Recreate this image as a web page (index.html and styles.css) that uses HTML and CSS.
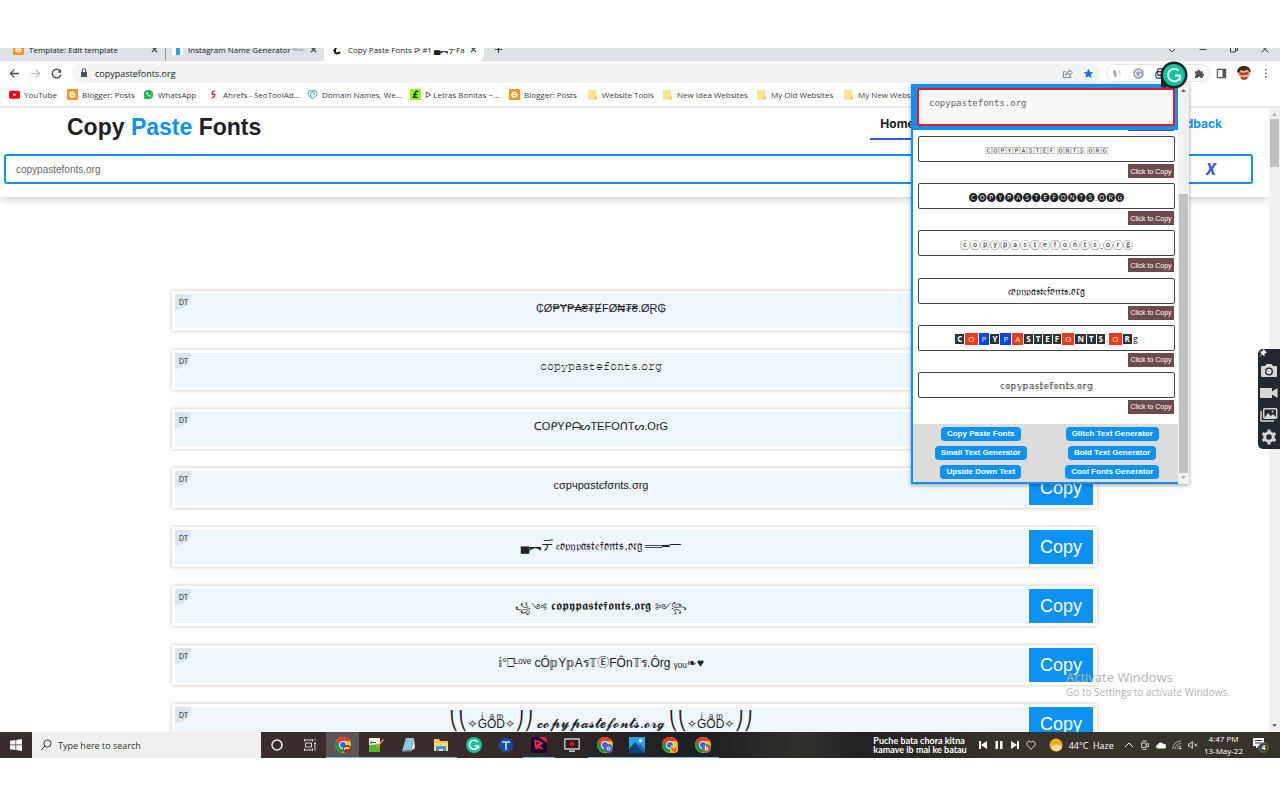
FILE: index.html
```html
<!DOCTYPE html>
<html lang="en">
<head>
<meta charset="utf-8">
<title>Copy Paste Fonts</title>
<link rel="stylesheet" href="styles.css">
</head>
<body>
<svg class="defs" aria-hidden="true">
  <defs>
    <symbol id="chrome" viewBox="0 0 16 16">
      <circle cx="8" cy="8" r="8" fill="#fbc116"/>
      <path d="M8 8 1.1 4A8 8 0 0 0 7.500 16L11 10z" fill="#229342"/>
      <path d="M1.1 4A8 8 0 0 1 14.900 4L8 4.400z" fill="#e33b2e"/>
      <path d="M1.100 4 8 4.400 8 8 4.500 9.500z" fill="#e33b2e"/>
      <circle cx="8" cy="8" r="3.900" fill="#fff"/>
      <circle cx="8" cy="8" r="3" fill="#2a6fe8"/>
    </symbol>
    <symbol id="blogger" viewBox="0 0 12 12">
      <rect width="12" height="12" rx="1" fill="#f9961e"/>
      <path d="M4.600 2.800h2a1.700 1.700 0 0 1 1.700 1.700v.7c0 .4.9.2.9.9v1.200a2 2 0 0 1-2 2H4.600a1.800 1.800 0 0 1-1.800-1.800V4.600a1.800 1.800 0 0 1 1.800-1.800z" fill="#fff"/>
      <path d="M4.700 4.800h1.800M4.700 7.300h2.600" stroke="#f9961e" stroke-width="1" stroke-linecap="round"/>
    </symbol>
    <symbol id="folder" viewBox="0 0 12 12">
      <path d="M1 1h9v10.500H1z" fill="#fde293"/>
      <path d="M8 8.500h2V7h.8v4.500H8z" fill="#f6cf61"/>
    </symbol>
    <symbol id="close" viewBox="0 0 8 8"><path d="M1 1l6 6M7 1L1 7" stroke="#3c4043" stroke-width="1.400"/></symbol>
    <symbol id="up" viewBox="0 0 6 4"><path d="M0 4l3-3 3 3z" fill="currentColor"/></symbol>
    <symbol id="down" viewBox="0 0 6 4"><path d="M0 0l3 3 3-3z" fill="currentColor"/></symbol>
  </defs>
</svg>

<div class="desktop">
  <div class="browser">
    <div class="tabs">
      <div class="tab tab-first">
        <svg class="i11"><use href="#blogger"/></svg><span class="tab-title">Template: Edit template</span><svg class="i7"><use href="#close"/></svg>
      </div>
      <div class="tab tab-second">
        <svg class="i11" viewBox="0 0 11 11"><path d="M0 0h11v11H0z" fill="#fff"/><path d="M4 1h4v10H4z" fill="#22a6f2"/></svg><span class="tab-title">Instagram Name Generator <small>ᵂʰᵃᵗˢ</small></span><svg class="i7"><use href="#close"/></svg>
      </div>
      <div class="tab tab-active">
        <svg class="i11" viewBox="0 0 11 11"><path d="M7.500 1.500C5 1 3.500 4 3 6.500 2.500 9.500 5 10.500 8 8" fill="none" stroke="#111" stroke-width="2"/><path d="M1 6.500 3 6" stroke="#111"/></svg><span class="tab-title">Copy Paste Fonts ᐅ #1 ▄︻デFan</span><svg class="i7"><use href="#close"/></svg>
      </div>
      <svg class="plus" viewBox="0 0 10 10"><path d="M5 1v8M1 5h8" stroke="#3c4043" stroke-width="1.300"/></svg>
      <div class="window-buttons">
        <svg viewBox="0 0 10 10"><path d="M2 5l3 3 3-3" fill="none" stroke="#3c4043"/></svg>
        <svg viewBox="0 0 10 10"><path d="M1.500 5.500h7" stroke="#3c4043"/></svg>
        <svg viewBox="0 0 10 10"><path d="M1.500 3h5v5h-5zM3.500 3V1.500h5v5H6.500" fill="none" stroke="#3c4043"/></svg>
        <svg viewBox="0 0 10 10"><path d="M1.500 2l7 6.500M8.500 2l-7 6.500" stroke="#3c4043"/></svg>
      </div>
    </div>

    <div class="toolbar">
      <svg class="i11" viewBox="0 0 12 12"><path d="M11 6H2M6 1.500 1.500 6 6 10.500" fill="none" stroke="#4a4d51" stroke-width="1.400"/></svg>
      <svg class="i11" viewBox="0 0 12 12"><path d="M1 6h9M6 1.500 10.500 6 6 10.500" fill="none" stroke="#b5b7ba" stroke-width="1.300"/></svg>
      <svg class="i11" viewBox="0 0 12 12"><path d="M10 3.500A4.700 4.700 0 1 0 10.700 7" fill="none" stroke="#4a4d51" stroke-width="1.500"/><path d="M11 1v4.200H6.800z" fill="#4a4d51"/></svg>
      <div class="omnibox">
        <svg class="lock" viewBox="0 0 8 10"><path d="M1 4h6v5H1z" fill="#4f5357"/><path d="M2.300 4V2.500a1.700 1.700 0 0 1 3.400 0V4" fill="none" stroke="#4f5357" stroke-width="1.100"/></svg>
        <span class="url">copypastefonts.org</span>
        <svg class="i11" viewBox="0 0 12 12"><path d="M4 4H1.500v6.500h8V8" fill="none" stroke="#6a6e73"/><path d="M3.500 8c.5-3 2.500-4 4.500-4V2l3.500 3L8 7.800V6C6 6 4.500 6.500 3.500 8z" fill="none" stroke="#6a6e73" stroke-width=".9"/></svg>
        <svg class="i11" viewBox="0 0 12 12"><path d="M6 .8 7.600 4.300l3.800.4-2.900 2.500.9 3.800L6 9 2.600 11l.9-3.800L.6 4.700l3.800-.4z" fill="#1a73e8"/></svg>
      </div>
      <div class="extensions">
        <svg class="i11" viewBox="0 0 12 12"><path d="M3 2c2 0 4 3 3 8C3 10 1 6 3 2z" fill="#a9acb0"/><path d="M7 1.500c3 1 5 4 2.500 8C9.500 6 8 5 7 1.500z" fill="#d2d4d6"/></svg>
        <svg class="i11" viewBox="0 0 12 12"><circle cx="6" cy="6" r="5.700" fill="#97a0c0"/><path d="M8.500 4A3.200 3.200 0 1 0 9.200 6.500H6.500" fill="none" stroke="#fff" stroke-width="1.200"/></svg>
        <svg class="i11" viewBox="0 0 12 12"><rect x="3" y="1" width="8" height="7" rx="1" fill="none" stroke="#333" stroke-width="1.200"/><rect x="1" y="4" width="8" height="7" rx="2" fill="none" stroke="#333" stroke-width="1.200"/><path d="M3 8h4" stroke="#333"/></svg>
        <svg class="i11 puzzle" viewBox="0 0 12 12"><path d="M1 3.500h2.500a1.500 1.500 0 1 1 3 0H9.500v2.700a1.500 1.500 0 1 1 0 3V11H7a1.500 1.500 0 0 0-3 0H1V8.500a1.500 1.500 0 0 0 0-2.800z" fill="#54585d"/></svg>
      </div>
      <svg class="i11" viewBox="0 0 12 12"><path d="M1.500 1.500h9v9h-9z" fill="none" stroke="#54585d" stroke-width="1.300"/><path d="M7 1.500h3.500v9H7z" fill="#54585d"/></svg>
      <svg class="avatar" viewBox="0 0 14 14"><path d="M1 2l3-1.500L8 .3l4 1.200 1.500 3.500-1 5L9 14H5L2 10 .3 5z" fill="#e9b48c"/><path d="M0 6C1 1 5-1 10 .5c3 1.500 4 4 3.500 6L10 3.500 7 5 4 4 2 7z" fill="#3b2620"/><path d="M2.500 6l4 1 5-1.500v3L8 9 7 8.500 5.500 9.500l-3-1z" fill="#d3301e"/><path d="M4 10.500c2 1.500 4 1.500 6 0l.5 2c-2 1.500-5 1.500-6.500 0z" fill="#8d3a2d"/></svg>
      <svg class="i11" viewBox="0 0 12 12"><path d="M4.500 1h1.600v1.600H4.500zM4.500 5h1.600v1.600H4.500zM4.500 9h1.600v1.600H4.500z" fill="#54585d"/></svg>
    </div>

    <nav class="bookmarks" aria-label="Bookmarks">
      <a href="#"><svg class="i11" viewBox="0 0 12 12"><rect y="2" width="12" height="8.500" rx="2" fill="#f00"/><path d="M4.800 4.300 8 6.200 4.800 8.100z" fill="#fff"/></svg>YouTube</a>
      <a href="#"><svg class="i11"><use href="#blogger"/></svg>Blogger: Posts</a>
      <a href="#"><svg class="i11" viewBox="0 0 12 12"><path d="M6 .8a5.200 5.200 0 1 1-2.500 9.800L.7 11.300l.8-2.700A5.200 5.200 0 0 1 6 .8z" fill="#1fb84f"/><path d="M4 3.500c-.8 2 2 5 4.300 4.700l.3-1.100-1.300-.6-.7.600C5.800 6.800 5.300 6 5.100 5.500l.5-.6-.5-1.400z" fill="#fff"/></svg>WhatsApp</a>
      <a href="#"><svg class="i11" viewBox="0 0 12 12"><path d="M9 1 4.500 2.500 3.500 6l3.500.9L3 11l4.200-1.800L8.500 5.500l-3-.7L6 3.300z" fill="#d81f26"/></svg>Ahrefs - SeoToolAd...</a>
      <a href="#"><svg class="i11" viewBox="0 0 12 12"><path d="M6 10.500C1 9 0 4 2.500 2.200 5 .7 8 3 8 6.500M6 10.500C11 9 12 4 9.500 2.200 7 .7 4 3 4 6.500c0 2 1 3.200 2 4z" fill="none" stroke="#4db8c9" stroke-width="1.100"/></svg>Domain Names, We...</a>
      <a href="#"><svg class="i11" viewBox="0 0 12 12"><path d="M0 0h12v12H0z" fill="#8cfa00"/><path d="M9 3C6 1.500 5.500 4 5.300 6 5 9 4 9 3 9.300c2-1 3 .7 5.500-.5M3.500 6H7.500" fill="none" stroke="#132b00" stroke-width="1.600"/></svg>ᐅ Letras Bonitas ~...</a>
      <a href="#"><svg class="i11"><use href="#blogger"/></svg>Blogger: Posts</a>
      <a href="#"><svg class="i11"><use href="#folder"/></svg>Website Tools</a>
      <a href="#"><svg class="i11"><use href="#folder"/></svg>New Idea Websites</a>
      <a href="#"><svg class="i11"><use href="#folder"/></svg>My Old Websites</a>
      <a href="#"><svg class="i11"><use href="#folder"/></svg>My New Websites</a>
    </nav>
  </div>

  <div class="viewport">
    <main class="page">
      <header class="site-header">
        <div class="brand-row">
          <h1>Copy <span>Paste</span> Fonts</h1>
          <nav class="site-nav" aria-label="Site">
            <a class="current" href="#">Home</a>
            <a href="#">Feedback</a>
          </nav>
        </div>
        <div class="search">
          <input type="text" aria-label="Your text" value="copypastefonts.org">
          <button type="button" class="clear" aria-label="Clear">X</button>
        </div>
      </header>
      <ul class="results">
        <li><div class="cell"><i class="dt">DT</i>₵Ø₱Ɏ₱₳₴₮ɆFØ₦₮₴.ØⱤ₲</div><button type="button">Copy</button></li>
        <li><div class="cell typewriter"><i class="dt">DT</i>𝚌𝚘𝚙𝚢𝚙𝚊𝚜𝚝𝚎𝚏𝚘𝚗𝚝𝚜.𝚘𝚛𝚐</div><button type="button">Copy</button></li>
        <li><div class="cell"><i class="dt">DT</i>ᑕOᑭYᑭᗩᔕTEFOᑎTᔕ.OrG</div><button type="button">Copy</button></li>
        <li><div class="cell"><i class="dt">DT</i>cσpчpαstєfσnts.σrg</div><button type="button">Copy</button></li>
        <li><div class="cell wide">
          <i class="dt">DT</i><span>▄︻デ 𝔠𝔬𝔭𝔶𝔭𝔞𝔰𝔱𝔢𝔣𝔬𝔫𝔱𝔰.𝔬𝔯𝔤 ══━一</span>
        </div><button type="button">Copy</button></li>
        <li><div class="cell low">
          <i class="dt">DT</i><span class="ornate">꧁༺</span><span class="script">𝖈𝖔𝖕𝖞𝖕𝖆𝖘𝖙𝖊𝖋𝖔𝖓𝖙𝖘.𝖔𝖗𝖌</span><span class="ornate">༻꧂</span>
        </div><button type="button">Copy</button></li>
        <li><div class="cell wide">
          <i class="dt">DT</i><span>𝕚°⎕ᴸᵒᵛᵉ cÔ𝕡Y𝕡Aร𝕋ⒺFÔn𝕋ร.Ôrg ᵧₒᵤ❧♥</span>
        </div><button type="button">Copy</button></li>
        <li><div class="cell">
          <i class="dt">DT</i><span class="wings">⎝⎝</span><span class="god">✧GͥOͣDͫ✧</span><span class="wings">⎠⎠</span><span class="hand">𝓬𝓸𝓹𝔂𝓹𝓪𝓼𝓽𝓮𝓯𝓸𝓷𝓽𝓼.𝓸𝓻𝓰</span><span class="wings">⎝⎝</span><span class="god">✧GͥOͣDͫ✧</span><span class="wings">⎠⎠</span>
        </div><button type="button">Copy</button></li>
      </ul>
    </main>
    <div class="scrollbar page-scroll">
      <svg class="arrow light"><use href="#up"/></svg><div class="thumb"></div><svg class="arrow"><use href="#down"/></svg>
    </div>
  </div>

  <footer class="taskbar">
    <div class="start"><svg viewBox="0 0 12 12"><path d="M0 1.700 5.500 1v4.600H0zM6.200.9 12 0v5.600H6.200zM0 6.300h5.500V11L0 10.300zM6.200 6.300H12V12l-5.800-.9z" fill="#fff"/></svg></div>
    <div class="task-search"><svg viewBox="0 0 12 12"><circle cx="7.500" cy="4.500" r="3.600" fill="none" stroke="#333"/><path d="M5 7 1 11.200" stroke="#333"/></svg><span>Type here to search</span></div>
    <div class="apps">
      <div><svg viewBox="0 0 16 16"><circle cx="8" cy="8" r="5" fill="none" stroke="#eee" stroke-width="1.500"/></svg></div>
      <div><svg viewBox="0 0 16 16"><path d="M2.500 3h8M2.500 13h8M3.500 6h6v4h-6zM2.500 2v2.500M10.500 2v2.500M2.500 11.500V14M10.500 11.500V14M13 5v8.500M13 2v1.500M12 6.500h2" fill="none" stroke="#ddd"/></svg></div>
      <div class="open focus"><svg viewBox="0 0 16 16"><use href="#chrome"/><circle cx="12" cy="12" r="4" fill="#8a3a26"/><path d="M9 11c2-2 4-1 6 0l-1 2H9z" fill="#f0c8a0"/><path d="M10 12h5v1h-5z" fill="#d22"/></svg></div>
      <div class="open"><svg viewBox="0 0 16 16"><path d="M1 1h11v14H1z" fill="#f0f5e8"/><path d="M1 8l11-1v8H1z" fill="#55b52b"/><path d="M3 4v3M3 5.500h5" stroke="#555"/><path d="M15 2 9 9l-1 2 2-1 6-7z" fill="#f0a020"/></svg></div>
      <div class="open"><svg viewBox="0 0 16 16"><path d="M6 1h8l-3 12-9 1z" fill="#8ec9e0"/><path d="M14 1l1 10-4 3z" fill="#dfe9ec"/><path d="M2 14l9-1 1 1.500-8 .5z" fill="#56828f"/></svg></div>
      <div class="open"><svg viewBox="0 0 16 16"><path d="M1 2h5l1 2h8v10H1z" fill="#f5c64a"/><path d="M1 6h14v8H1z" fill="#ffdc78"/><path d="M3 14V9h10v5h-3v-2H6v2z" fill="#3b97e0"/></svg></div>
      <div><svg viewBox="0 0 16 16"><circle cx="8" cy="8" r="8" fill="#15c39a"/><path d="M11.500 5A4.500 4.500 0 1 0 12.300 9H8.800M12.500 8.500v3" fill="none" stroke="#fff" stroke-width="1.600"/></svg></div>
      <div><svg viewBox="0 0 16 16"><circle cx="8" cy="8" r="7.500" fill="#174a9c"/><path d="M4 5h8M8 5v8" stroke="#a8c4ec" stroke-width="2"/></svg></div>
      <div class="open"><svg viewBox="0 0 16 16"><rect width="16" height="16" rx="3" fill="#1d0728"/><path d="M8 0h5a3 3 0 0 1 3 3v3z" fill="#e5254e"/><path d="M4.500 3.500l6 2.500-6 3.500zM4.500 12.500l6-6M7 9.500l4.500 2.500" fill="none" stroke="#f5285c" stroke-width="1.600"/></svg></div>
      <div><svg viewBox="0 0 16 16"><path d="M.8 2h14.400v10H.8z" fill="#222" stroke="#ccc" stroke-width="1.400"/><circle cx="8" cy="7" r="2.400" fill="#e01010"/><path d="M5 14.200h6" stroke="#ccc" stroke-width="1.500"/></svg></div>
      <div class="open"><svg viewBox="0 0 16 16"><use href="#chrome"/><circle cx="11.500" cy="11.500" r="4.500" fill="#5565b8"/><circle cx="11.500" cy="11.500" r="1.400" fill="none" stroke="#fff"/></svg></div>
      <div class="open"><svg viewBox="0 0 16 16"><path d="M0 0h16v16H0z" fill="#2aa5e8"/><path d="M0 12l6-7 10 11H0z" fill="#10427c"/><path d="M8 10l3-3 5 5v4z" fill="#1b66ad"/><circle cx="11.500" cy="3.500" r="1.700" fill="#fff"/></svg></div>
      <div class="open"><svg viewBox="0 0 16 16"><use href="#chrome"/><circle cx="12" cy="12" r="4" fill="#f2c230"/><path d="M9 10l3 2 3-3-1 6-4-1z" fill="#e25a30"/></svg></div>
      <div class="open"><svg viewBox="0 0 16 16"><use href="#chrome"/><circle cx="11.500" cy="11.500" r="4.500" fill="#8a6a60"/><path d="M10.500 8.500v4.500h1.500a1.300 1.300 0 0 0 0-2.500h-1.500" fill="none" stroke="#fff"/></svg></div>
    </div>
    <div class="tray">
      <p class="song">Puche bata chora kitna<br>kamave ib mai ke batau</p>
      <div class="media">
        <svg viewBox="0 0 10 10"><path d="M1 1h2v8H1zM9 1v8L3 5z" fill="#fff"/></svg>
        <svg viewBox="0 0 10 10"><path d="M1.500 1h2.500v8H1.500zM6 1h2.500v8H6z" fill="#fff"/></svg>
        <svg viewBox="0 0 10 10"><path d="M7 1h2v8H7zM1 1v8l6-4z" fill="#fff"/></svg>
        <svg viewBox="0 0 10 10"><path d="M5 9.300 1.300 5.500C-.5 2.500 3.300-.5 5 2.300 6.700-.5 10.500 2.500 8.700 5.500z" fill="none" stroke="#eee" stroke-width=".9"/></svg>
      </div>
      <svg class="sun" viewBox="0 0 14 14"><circle cx="7" cy="7" r="6.500" fill="#f9ad22"/><path d="M2 10a2.500 2.500 0 0 1 3-2.500 3 3 0 0 1 5 0c3-.5 3.500 2 2.500 3.500C10 14 4 14 2 10z" fill="#f6dc9a"/></svg>
      <span class="weather">44°C&ensp;Haze</span>
      <div class="status">
        <svg viewBox="0 0 10 10"><path d="M1 7l4-4 4 4" fill="none" stroke="#eee"/></svg>
        <svg viewBox="0 0 10 10"><path d="M1.500 3h4.500v4.500H1.500zM6 4.500l2.500-1v3.500L6 6M2 1h5M2 9.300h5" fill="none" stroke="#ddd" stroke-width=".9"/></svg>
        <svg viewBox="0 0 10 10"><path d="M2 8.500a2 2 0 0 1 0-4A3 3 0 0 1 7.500 4 2.200 2.200 0 0 1 8.500 8.500z" fill="#fff"/></svg>
        <svg viewBox="0 0 10 10"><path d="M.8 9A8 8 0 0 1 9 1M3 9.200A6 6 0 0 1 9.200 3.500M5.200 9.300A4 4 0 0 1 9.300 6" fill="none" stroke="#bbb" stroke-width=".9"/><circle cx="8.300" cy="8.500" r="1" fill="#fff"/></svg>
        <svg viewBox="0 0 10 10"><path d="M.5 3.800H2L4.300 1.500v7L2 6.200H.5zM6.200 3.500l3 3M9.200 3.500l-3 3" fill="none" stroke="#eee" stroke-width=".9"/></svg>
      </div>
      <p class="clock">4:47 PM<br>13-May-22</p>
      <svg class="notice" viewBox="0 0 18 16"><path d="M1 1h11v8H6.500L4 11.500V9H1z" fill="#fff"/><path d="M3 3.500h7M3 6h7" stroke="#38322c"/><circle cx="11.500" cy="10.500" r="4.800" fill="#47423d" stroke="#8a8683" stroke-width=".7"/><text x="11.500" y="13" class="count">4</text></svg>
    </div>
  </footer>

  <aside class="popup">
    <div class="popup-body">
      <div class="popup-top"><textarea aria-label="Text to convert" spellcheck="false">copypastefonts.org</textarea></div>
      <div class="styles">
        <div class="style"><div class="sample squares">🄲🄾🄿🅈🄿🄰🅂🅃🄴🄵 🄾🄽🅃🅂 🄾🅁🄶</div><button type="button">Click to Copy</button></div>
        <div class="style"><div class="sample discs">🅒🅞🅟🅨🅟🅐🅢🅣🅔🅕🅞🅝🅣🅢.🅞🅡🅖</div><button type="button">Click to Copy</button></div>
        <div class="style"><div class="sample">ⓒⓞⓟⓨⓟⓐⓢⓣⓔⓕⓞⓝⓣⓢ.ⓞⓡⓖ</div><button type="button">Click to Copy</button></div>
        <div class="style"><div class="sample fraktur">𝔠𝔬𝔭𝔶𝔭𝔞𝔰𝔱𝔢𝔣𝔬𝔫𝔱𝔰.𝔬𝔯𝔤</div><button type="button">Click to Copy</button></div>
        <div class="style"><div class="sample blocks"><b>C</b><b class="red">O</b><b class="blue">P</b><b>Y</b><b class="blue">P</b><b class="red">A</b><b>S</b><b>T</b><b>E</b><b>F</b><b class="red">O</b><b>N</b><b>T</b><b>S</b>.<b class="red">O</b><b>R</b>g</div><button type="button">Click to Copy</button></div>
        <div class="style"><div class="sample double">𝕔𝕠𝕡𝕪𝕡𝕒𝕤𝕥𝕖𝕗𝕠𝕟𝕥𝕤.𝕠𝕣𝕘</div><button type="button">Click to Copy</button></div>
      </div>
      <div class="links">
        <a href="#">Copy Paste Fonts</a><a href="#">Glitch Text Generator</a>
        <a href="#">Small Text Generator</a><a href="#">Bold Text Generator</a>
        <a href="#">Upside Down Text</a><a href="#">Cool Fonts Generator</a>
      </div>
    </div>
    <div class="scrollbar popup-scroll">
      <svg class="arrow"><use href="#up"/></svg><div class="thumb"></div><svg class="arrow light"><use href="#down"/></svg>
    </div>
  </aside>

  <svg class="grammarly" viewBox="0 0 28 28">
    <path d="M1 14v11.500a1 1 0 0 0 1 1h5z" fill="#1b2733"/>
    <circle cx="14" cy="14" r="13.500" fill="#16232e"/>
    <circle cx="14" cy="14" r="11" fill="#15c39a"/>
    <path d="M18.500 9.500A6.200 6.200 0 1 0 19.500 17.500" fill="none" stroke="#fff" stroke-width="1.800"/>
    <path d="M15 14.500h5v5" fill="none" stroke="#fff" stroke-width="1.800"/>
  </svg>

  <div class="recorder">
    <svg class="pin" viewBox="0 0 10 10"><path d="M5.500 0 10 4.500 7.300 5.500 6.500 9 4 6.500 1 9.500.5 9 3.500 6 1 3.500 4.500 2.700z" fill="#fff"/></svg>
    <svg viewBox="0 0 18 16"><path d="M1 4a1 1 0 0 1 1-1h3l1.500-2h5L13 3h3a1 1 0 0 1 1 1v9a1 1 0 0 1-1 1H2a1 1 0 0 1-1-1z" fill="#d6d6d6"/><circle cx="9" cy="8.500" r="3.300" fill="none" stroke="#22272e" stroke-width="1.300"/></svg>
    <svg viewBox="0 0 18 16"><path d="M0 3h12v3.500L17.500 3v10L12 9.500V13H0z" fill="#d6d6d6"/></svg>
    <svg viewBox="0 0 18 16"><path d="M1 4v10h13" fill="none" stroke="#d6d6d6" stroke-width="1.500"/><rect x="3.700" y="1.700" width="13" height="9.600" rx="1" fill="none" stroke="#d6d6d6" stroke-width="1.500"/><path d="M4 11l4-5 3 3 2-2 4 4z" fill="#d6d6d6"/><circle cx="12.500" cy="4.500" r="1" fill="#d6d6d6"/></svg>
    <svg viewBox="0 0 18 16"><circle cx="9" cy="8" r="4.300" fill="none" stroke="#d6d6d6" stroke-width="3"/><path d="M9 .5v3M9 12.500v3M2.500 4.200l2.600 1.500M12.900 10.300l2.600 1.500M2.500 11.800l2.600-1.500M12.900 5.700l2.600-1.500" stroke="#d6d6d6" stroke-width="3"/></svg>
  </div>

  <div class="watermark"><strong>Activate Windows</strong><span>Go to Settings to activate Windows.</span></div>
</div>
</body>
</html>
```
FILE: styles.css
```css
:root {
  --blue: #0d92f4;
  --brown: #6d4a4b;
  --ink: #202124;
  --ui: "Open Sans", "Noto Sans", "DejaVu Sans", "Noto Sans CJK JP", sans-serif;
  --arial: "Liberation Sans", "DejaVu Sans", "Noto Sans CJK JP", sans-serif;
}

* { box-sizing: border-box; }

body {
  margin: 0;
  height: 100vh;
  padding: 48px 0 42px;
  background: #fff;
  color: var(--ink);
  font-family: var(--arial);
  overflow: hidden;
}

a { color: inherit; text-decoration: none; }
button { border: 0; padding: 0; font-family: inherit; color: inherit; }
p, h1, ul { margin: 0; padding: 0; }
svg { display: block; flex: none; }

.defs { position: absolute; width: 0; height: 0; }
.i11 { width: 11px; height: 11px; }
.i7 { width: 7px; height: 7px; }

.desktop {
  position: relative;
  display: flex;
  flex-direction: column;
  height: 100%;
  overflow: hidden;
}

/* Browser chrome */
.browser { font-family: var(--ui); }

.tabs {
  display: flex;
  align-items: flex-end;
  height: 13px;
  overflow: hidden;
  background: #dee1e6;
}
.tab {
  display: flex;
  align-items: center;
  gap: 5px;
  height: 23px;
  padding: 0 7px 0 13px;
  font-size: 8px;
  white-space: nowrap;
}
.tab-title { flex: 1; overflow: hidden; }
.tab-title small { font-size: 6px; color: #888; }
.tab-first { width: 166px; border-right: 1px solid #999; }
.tab-second { width: 158px; padding-left: 6px; }
.tab-active { width: 160px; padding-left: 8px; background: #fff; border-radius: 0 0 6px 0; }
.plus { width: 9px; height: 9px; margin: 0 0 7px 10px; }
.window-buttons { display: flex; gap: 21px; margin: 0 10px 7px auto; }
.window-buttons svg { width: 10px; height: 10px; }

.toolbar {
  display: flex;
  align-items: center;
  gap: 10px;
  height: 24px;
  padding: 0 8px 0 9px;
}
.omnibox {
  flex: 1;
  display: flex;
  align-items: center;
  gap: 10px;
  height: 19px;
  padding: 0 6px 0 8px;
  border-radius: 10px;
  background: #f1f3f4;
}
.lock { width: 8px; height: 10px; }
.url { flex: 1; margin-left: -3px; font-size: 9px; }
.extensions {
  display: flex;
  align-items: center;
  gap: 11px;
  width: 104px;
  height: 18px;
  margin-left: -4px;
  padding: 0 4px;
  border: 1px solid #e4e6e8;
  border-radius: 9px;
}
.puzzle { margin-left: auto; }
.extensions + svg { margin-left: -4px; }
.avatar { width: 14px; height: 14px; }

.bookmarks {
  display: grid;
  grid-template-columns: 58px 76px 65px 99px 103px 99px 78px 75px 94px 87px auto;
  align-items: center;
  height: 23px;
  padding: 0 0 2px 9px;
  border-bottom: 2px solid #e8eaed;
  font-size: 8px;
  color: #3c4043;
  white-space: nowrap;
}
.bookmarks a { display: flex; align-items: center; gap: 4px; }

/* Web page */
.viewport { flex: 1; display: flex; min-height: 0; }
.page { flex: 1; min-width: 0; overflow: hidden; }

.site-header {
  height: 89px;
  background: #fff;
  box-shadow: 0 2px 8px rgba(0, 0, 0, .2);
}
.brand-row {
  display: flex;
  justify-content: space-between;
  height: 46px;
  padding: 0 47px 0 67px;
}
h1 { font-size: 23px; line-height: 38px; }
h1 span { color: var(--blue); }
.site-nav {
  display: flex;
  gap: 240px;
  font: bold 12px/32px Inter, sans-serif;
}
.site-nav a { color: var(--blue); }
.site-nav .current {
  height: 32px;
  padding: 0 10px;
  border-bottom: 2px solid #2a5bd7;
  color: var(--ink);
}
.search {
  display: flex;
  height: 30px;
  margin: 0 16px 0 4px;
  border: 2px solid var(--blue);
  border-radius: 3px;
}
.search input {
  flex: 1;
  border: 0;
  outline: 0;
  padding: 0 10px;
  background: none;
  color: #666;
  font: 10px var(--arial);
}
.clear {
  width: 80px;
  background: none;
  color: #2a5bd7;
  font: italic bold 16px Roboto, sans-serif;
}

.results {
  display: grid;
  gap: 19px;
  padding: 94px 172px 0;
  list-style: none;
}
.results li {
  display: flex;
  gap: 2px;
  height: 40px;
  padding: 3px 4px 3px 3px;
  box-shadow: 0 0 4px rgba(0, 0, 0, .25);
}
.cell {
  position: relative;
  flex: 1;
  display: flex;
  justify-content: center;
  align-items: center;
  padding-bottom: 6px;
  background: #eef6fe;
  font-size: 11px;
  white-space: nowrap;
}
.typewriter { font-size: 10px; }
.wide { font-size: 12px; }
.low { gap: 4px; padding-bottom: 0; }
.ornate { padding-top: 8px; font-size: 10px; }
.script { font-size: 13px; }
.wings { font-size: 18px; line-height: 20px; }
.god { font-size: 12px; padding-top: 5px; }
.hand { padding: 4px 4px 0; font-size: 14px; }
.dt {
  position: absolute;
  top: 0;
  left: 0;
  width: 16px;
  height: 16px;
  border-radius: 0 0 16px 0;
  background: #d8e6f0;
  font: 7px/18px Inter, sans-serif;
  text-indent: 4px;
}
.results button {
  width: 64px;
  background: var(--blue);
  color: #fff;
  font-size: 18px;
}

.scrollbar {
  display: flex;
  flex-direction: column;
  align-items: center;
  flex: none;
  width: 11px;
  padding: 4px 0;
  background: #f1f1f1;
  color: #505050;
}
.thumb { width: 9px; background: #c1c1c1; }
.arrow { width: 5px; height: 4px; }
.light { color: #a3a3a3; }
.page-scroll .thumb { height: 48px; margin: 3px 0 auto; }

/* Extension popup */
.popup {
  position: absolute;
  top: 36px;
  right: 91px;
  display: flex;
  width: 278px;
  height: 400px;
  background: #fff;
  box-shadow: 0 1px 4px rgba(0, 0, 0, .4);
}
.popup-body {
  flex: 1;
  display: flex;
  flex-direction: column;
  border: solid var(--blue);
  border-width: 0 0 2px 2px;
}
.popup-top { position: relative; padding: 4px 3px 4px 4px; background: var(--blue); }
.popup-top::after {
  content: "";
  position: absolute;
  top: 100%;
  right: 4px;
  width: 46px;
  height: 1px;
  background: var(--brown);
}
.popup-top textarea {
  display: block;
  width: 100%;
  height: 38px;
  padding: 8px 10px;
  border: 2px solid #f0141e;
  border-radius: 3px;
  background: #f8f8f8;
  color: #666;
  font: 9px/10px "DejaVu Sans Mono", monospace;
  resize: none;
  outline: 0;
  overflow: hidden;
}
.styles {
  flex: 1;
  display: flex;
  flex-direction: column;
  justify-content: space-between;
  padding: 6px 3px 10px 5px;
}
.style { display: flex; flex-direction: column; align-items: flex-end; gap: 2px; }
.sample {
  display: flex;
  align-items: center;
  justify-content: center;
  width: 100%;
  height: 26px;
  padding-top: 2px;
  border: 1px solid #444;
  border-radius: 2px;
  font-size: 10px;
  white-space: pre;
}
.squares { font-size: 7px; }
.discs, .double { font-size: 9px; }
.fraktur { font-size: 11px; }
.blocks { gap: 1px; font: 9px var(--ui); }
.blocks b { padding: 0 2px; background: #2c3236; color: #fff; font: bold 8px/10px var(--ui); }
.blocks .red, .blocks .blue { padding: 0 3px; font-weight: 400; line-height: 12px; }
.blocks .red { background: #f03a17; }
.blocks .blue { background: #0044fa; }
.style button {
  width: 46px;
  height: 14px;
  margin-right: 1px;
  background: var(--brown);
  color: #fff;
  font-size: 7px;
  white-space: nowrap;
}
.links {
  display: grid;
  grid-template-columns: 1fr 1fr;
  justify-items: center;
  gap: 5px 0;
  padding: 3px 0 3px 2px;
  background: #dcdcdc;
}
.links a {
  padding: 0 6px;
  border-radius: 4px;
  background: var(--blue);
  color: #fff;
  font-size: 8px;
  font-weight: bold;
  line-height: 14px;
}
.popup-scroll .thumb { flex: 1; margin: 102px 0 3px; }

.grammarly { position: absolute; top: 13px; right: 92px; width: 28px; height: 28px; }

/* Screen recorder dock */
.recorder {
  position: absolute;
  top: 301px;
  right: 0;
  display: flex;
  flex-direction: column;
  align-items: center;
  gap: 6px;
  width: 22px;
  padding-bottom: 4px;
  border-radius: 5px 0 0 5px;
  background: #22272e;
}
.recorder svg { width: 18px; height: 16px; }
.recorder .pin { align-self: flex-start; width: 10px; height: 8px; }

.watermark {
  position: absolute;
  left: 1066px;
  bottom: 59px;
  display: grid;
  color: #b4b4b4;
  font: 10px/14px var(--ui);
  white-space: nowrap;
}
.watermark strong { font-size: 13px; line-height: 16px; font-weight: 400; }

/* Taskbar */
.taskbar {
  display: flex;
  align-items: center;
  height: 26px;
  background: linear-gradient(90deg, #3a2c2a 0 36%, #1d1f21 55%, #32302c 63%, #1f2123 67%, #37322a 78%);
  color: #fff;
  font-family: var(--ui);
}
.start { width: 32px; padding-left: 10px; }
.start svg { width: 12px; height: 12px; }
.task-search {
  display: flex;
  align-items: center;
  gap: 6px;
  width: 229px;
  height: 100%;
  padding-left: 8px;
  background: #f0f0f0;
  color: #333;
  font-size: 9px;
}
.task-search svg { width: 12px; height: 12px; }
.apps { display: flex; width: 458px; height: 100%; }
.apps div {
  flex: 1;
  display: flex;
  align-items: center;
  justify-content: center;
  border-bottom: 1px solid transparent;
}
.apps .open { border-color: #76b9ed; }
.apps .focus { background: #5c5553; }
.apps svg { width: 16px; height: 16px; }
.tray {
  display: flex;
  align-items: center;
  margin-left: auto;
  padding-right: 10px;
  font-size: 9px;
}
.song { font: bold 9px/9px Lato, sans-serif; }
.media { display: flex; gap: 6px; margin: 0 13px 0 11px; }
.media svg, .status svg { width: 10px; height: 10px; }
.sun { width: 14px; height: 14px; margin-right: 6px; }
.status { display: flex; gap: 6px; margin: 0 6px 0 10px; }
.clock { font-size: 8px; line-height: 12px; text-align: center; }
.notice { width: 18px; height: 16px; margin-left: 9px; }
.count { font: bold 7px var(--ui); fill: #fff; text-anchor: middle; }
```
